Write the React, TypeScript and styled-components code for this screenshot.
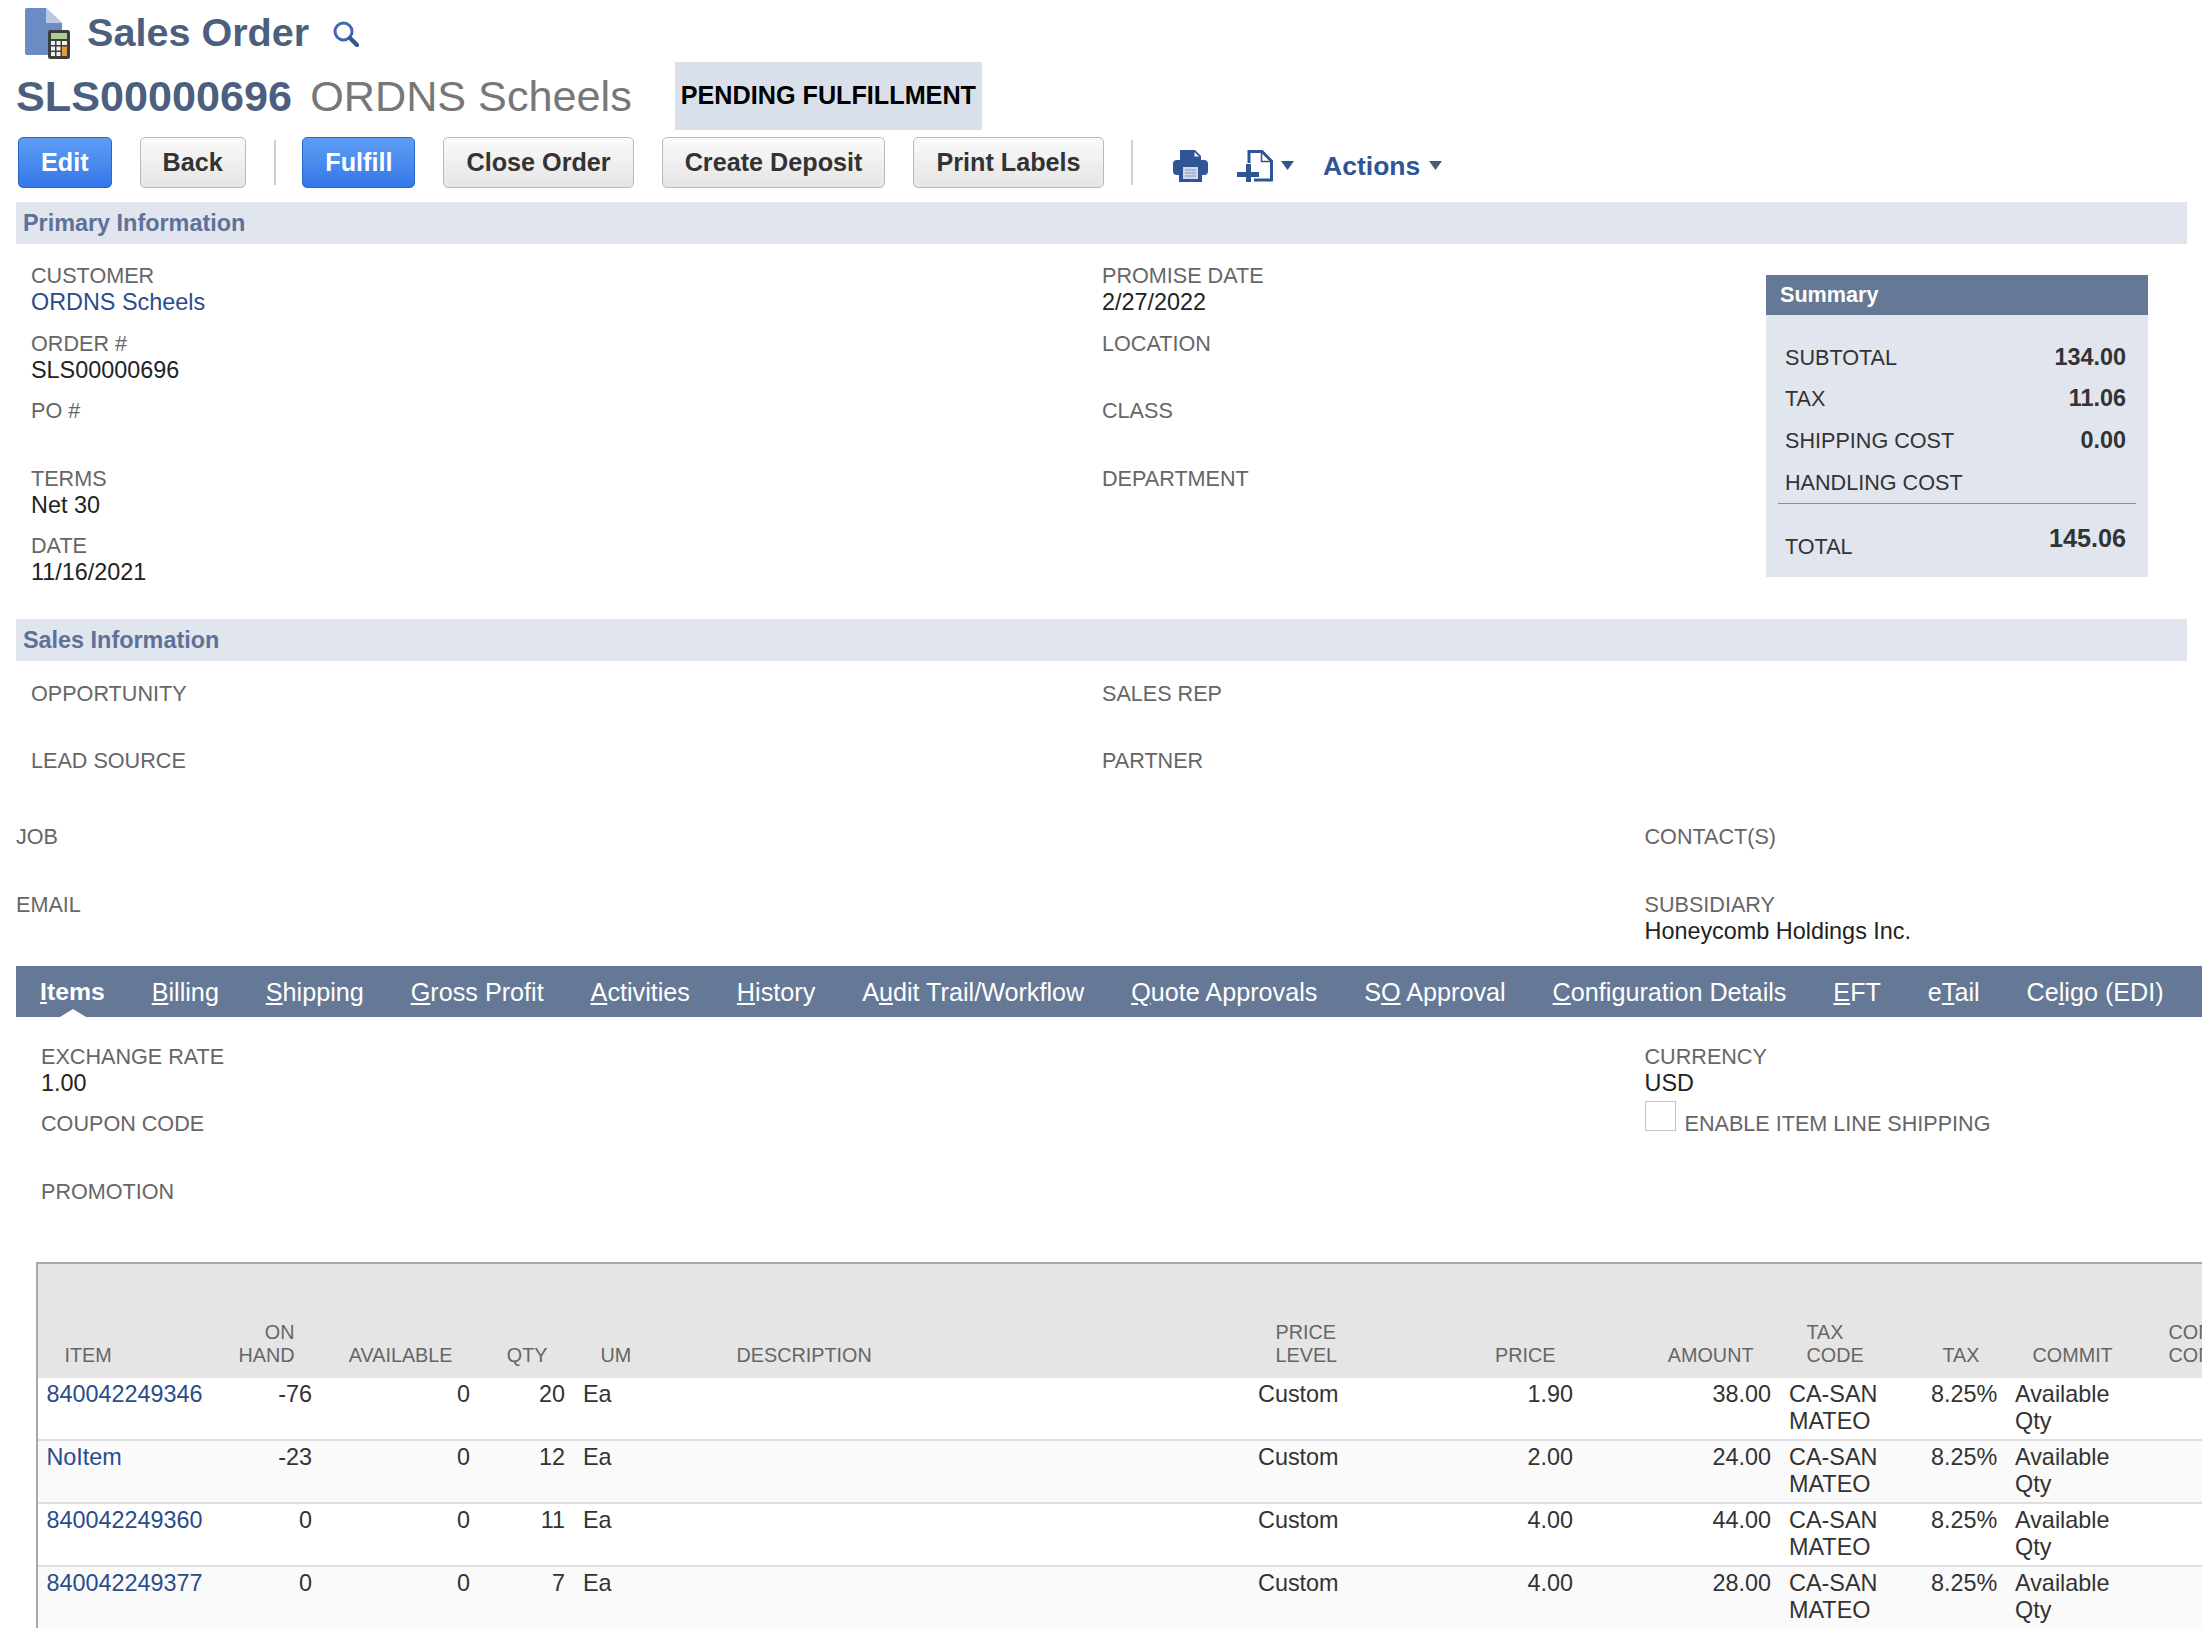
import React from 'react';
import styled, { createGlobalStyle } from 'styled-components';

const GlobalStyle = createGlobalStyle`
    html, body {
        margin: 0;
        padding: 0;
        background: #fff;
        font-family: "Liberation Sans", Arial, sans-serif;
        overflow: hidden;
    }
`;

const Page = styled.div`
    width: 2202px;
    height: 1628px;
    overflow: hidden;
    padding-left: 16px;
    box-sizing: border-box;
    font-size: 21.6px;
    color: #666;
`;

// Page title
const TitleRow = styled.div`
    height: 62px;
    display: flex;
    align-items: flex-start;
    padding-left: 9px;
`;
const TitleIcon = styled.svg`
    width: 45px;
    height: 51px;
    margin-top: 8px;
    flex: none;
`;
const Title = styled.h1`
    margin: 0 0 0 17px;
    font-size: 39.6px;
    line-height: 64px;
    font-weight: bold;
    color: #4d5f7e;
`;
const SearchIcon = styled.svg`
    width: 26px;
    height: 26px;
    margin: 21px 0 0 24px;
    flex: none;
`;

const RecordRow = styled.div`
    height: 68px;
    display: flex;
    align-items: flex-start;
`;
const RecordId = styled.span`
    font-size: 43.2px;
    line-height: 68px;
    font-weight: bold;
    color: #4d5f7e;
`;
const RecordName = styled.span`
    font-size: 43.2px;
    line-height: 68px;
    color: #777;
    margin-left: 18px;
`;
const StatusBadge = styled.div`
    margin-left: 43px;
    height: 68px;
    line-height: 66px;
    padding: 0 6px;
    background: #d9e0ea;
    color: #000;
    font-size: 25.2px;
    font-weight: bold;
    white-space: nowrap;
`;

// Toolbar
const Toolbar = styled.div`
    margin-top: 7px;
    height: 51px;
    display: flex;
    align-items: center;
    padding-left: 2px;
`;
const Button = styled.button<{ $primary?: boolean }>`
    height: 51px;
    padding: 0 22px;
    margin-right: 28px;
    box-sizing: border-box;
    border-radius: 5px;
    font-family: inherit;
    font-size: 25.2px;
    font-weight: bold;
    white-space: nowrap;
    border: 1px solid ${p => (p.$primary ? '#2a66c4' : '#b9b9b9')};
    color: ${p => (p.$primary ? '#fff' : '#333')};
    background: ${p => (p.$primary
        ? 'linear-gradient(#5f9ef6, #3477e8)'
        : 'linear-gradient(#fafafa, #e5e5e5)')};
`;
const ToolbarDivider = styled.span<{ $before?: number; $after: number }>`
    width: 2px;
    height: 45px;
    background: #d0d0d0;
    flex: none;
    margin-left: ${p => p.$before ?? 0}px;
    margin-right: ${p => p.$after}px;
`;
const PrintIcon = styled.svg`
    width: 35px;
    height: 32px;
    margin: 6px 29px 0 0;
    flex: none;
`;
const NewIcon = styled.svg`
    width: 36px;
    height: 32px;
    margin: 6px 8px 0 0;
    flex: none;
`;
const Caret = styled.svg`
    width: 13px;
    height: 9px;
    margin-top: 6px;
    flex: none;
`;
const ActionsLink = styled.span`
    margin: 7px 9px 0 29px;
    font-size: 26.5px;
    line-height: 30px;
    font-weight: bold;
    color: #2f5595;
`;

// Section bands and fields
const SectionBand = styled.div<{ $top: number }>`
    width: 2171px;
    height: 42px;
    margin-top: ${p => p.$top}px;
    padding-left: 7px;
    box-sizing: border-box;
    background: #e0e5ee;
    color: #5d7199;
    font-size: 23.4px;
    font-weight: bold;
    line-height: 42px;
`;
const FieldGrid = styled.div<{ $columns: string; $left: number; $top: number }>`
    display: grid;
    grid-template-columns: ${p => p.$columns};
    padding-left: ${p => p.$left}px;
    padding-top: ${p => p.$top}px;
`;
const FieldColumn = styled.div``;
const Field = styled.div`
    height: 54px;
    margin-bottom: 13.5px;
    line-height: 27px;
`;
const FieldLabel = styled.div`
    font-size: 21.6px;
    color: #666;
    white-space: nowrap;
`;
const FieldValue = styled.div`
    font-size: 23.4px;
    color: #222;
    white-space: nowrap;
`;
const FieldLink = styled(FieldValue)`
    color: #2b4c8c;
`;
const CheckRow = styled.div`
    position: relative;
    padding-left: 40px;
    line-height: 27px;
    height: 54px;
    margin-bottom: 13.5px;
    white-space: nowrap;
`;
const CheckBox = styled.span`
    position: absolute;
    left: 0;
    top: -9.5px;
    width: 31px;
    height: 30px;
    box-sizing: border-box;
    border: 1px solid #c4c4c4;
    background: #fff;
`;

// Summary box
const SummaryBox = styled.div`
    width: 382px;
    height: 302.7px;
    margin-top: 12.5px;
    background: #e0e5ee;
`;
const SummaryHead = styled.div`
    height: 40px;
    line-height: 40px;
    padding-left: 14px;
    background: #657896;
    color: #fff;
    font-size: 21.6px;
    font-weight: bold;
`;
const SummaryRows = styled.div`
    padding: 22px 22px 0 19px;
`;
const SummaryRow = styled.div`
    height: 41.7px;
    line-height: 41.7px;
    display: flex;
    justify-content: space-between;
    color: #333;
    font-size: 21.6px;
`;
const SummaryAmount = styled.span`
    font-size: 23.4px;
    font-weight: bold;
`;
const SummaryRule = styled.div`
    height: 1px;
    margin: 0 12px;
    background: #8c8c98;
`;
const SummaryTotal = styled.div`
    display: flex;
    justify-content: space-between;
    padding: 21px 22px 0 19px;
    line-height: 27px;
    color: #333;
`;
const TotalLabel = styled.span`
    padding-top: 8px;
    font-size: 21.6px;
`;
const TotalAmount = styled.span`
    font-size: 25.2px;
    font-weight: bold;
`;

// Tabs
const TabBar = styled.div`
    width: 2186px;
    height: 51px;
    margin-top: 7.7px;
    padding-left: 24px;
    box-sizing: border-box;
    display: flex;
    gap: 46.9px;
    background: #657896;
`;
const Tab = styled.span<{ $active?: boolean }>`
    position: relative;
    height: 51px;
    font-size: ${p => (p.$active ? '24.8px' : '25.2px')};
    line-height: 52.5px;
    color: #fff;
    white-space: nowrap;
    font-weight: ${p => (p.$active ? 'bold' : 'normal')};
    ${p => p.$active && `
        &::after {
            content: '';
            position: absolute;
            left: 20px;
            bottom: 0;
            border-left: 13px solid transparent;
            border-right: 13px solid transparent;
            border-bottom: 8px solid #fff;
        }
    `}
`;
const TabPanel = styled.div`
    padding-top: 25.5px;
`;

// Item table
const TableFrame = styled.div`
    margin: 17px 0 0 20px;
    border-left: 2px solid #a8a8a8;
    border-top: 2px solid #a8a8a8;
`;
const ItemTable = styled.table`
    table-layout: fixed;
    width: 2264px;
    border-collapse: separate;
    border-spacing: 0;
`;
const HeadRow = styled.tr`
    height: 114px;
    background: #e5e5e5;
`;
const HeadCell = styled.th<{ $right?: boolean }>`
    vertical-align: bottom;
    font-size: 19.8px;
    line-height: 23px;
    font-weight: normal;
    color: #666;
    white-space: nowrap;
    text-align: ${p => (p.$right ? 'right' : 'left')};
    padding: ${p => (p.$right ? '0 26.5px 11.5px 0' : '0 0 11.5px 26.5px')};
`;
const BodyRow = styled.tr<{ $shaded: boolean }>`
    background: ${p => (p.$shaded ? '#fafafa' : '#fff')};
`;
const BodyCell = styled.td<{ $right?: boolean }>`
    vertical-align: top;
    font-size: 23.4px;
    line-height: 27px;
    color: #333;
    text-align: ${p => (p.$right ? 'right' : 'left')};
    padding: 3px 9px 4.1px 9px;
    border-bottom: 2px solid #dedede;
    &:first-child {
        padding-left: 8.4px;
    }
`;
const ItemLink = styled.a`
    color: #2b4c8c;
    text-decoration: none;
`;

const CalculatorDoc = () => (
    <TitleIcon viewBox="0 0 45 51">
        <path d="M2 0h19l16 15v32H2a2 2 0 0 1-2-2V2a2 2 0 0 1 2-2z" fill="#6a8bc4" />
        <path d="M21 0l16 15H21z" fill="#b9c9e5" />
        <rect x="23" y="22" width="22" height="29" rx="2.5" fill="#3e3e3e" />
        <rect x="26" y="25" width="16" height="6" fill="#a9d08e" />
        <g fill="#f2f2f2">
            <rect x="26" y="33" width="4" height="4" /><rect x="31.5" y="33" width="4" height="4" />
            <rect x="26" y="38.5" width="4" height="4" /><rect x="31.5" y="38.5" width="4" height="4" />
            <rect x="26" y="44" width="4" height="4" /><rect x="31.5" y="44" width="4" height="4" />
            <rect x="37" y="33" width="5" height="4" />
        </g>
        <rect x="37" y="38.5" width="5" height="9.5" fill="#e39a3b" />
    </TitleIcon>
);

const Magnifier = () => (
    <SearchIcon viewBox="0 0 26 26">
        <circle cx="10.5" cy="10.5" r="8.5" fill="none" stroke="#3f68ab" strokeWidth="3" />
        <path d="M17 17l7 7" stroke="#34578f" strokeWidth="4.4" strokeLinecap="round" />
    </SearchIcon>
);

const Printer = () => (
    <PrintIcon viewBox="0 0 35 32">
        <path d="M7 0h15l6 6v7H7z" fill="#2f5595" />
        <path d="M21.5 2l4.5 4.5h-4.5z" fill="#fff" />
        <rect x="0" y="10" width="35" height="15" rx="4" fill="#2f5595" />
        <rect x="6" y="15" width="23" height="17" fill="#2f5595" />
        <rect x="10" y="17" width="15" height="12" fill="#cfd9ea" />
        <path d="M12 20h11M12 23h11M12 26h11" stroke="#7f97c2" strokeWidth="1.2" />
    </PrintIcon>
);

const NewDocument = () => (
    <NewIcon viewBox="0 0 36 32">
        <path d="M12 13V1.5h13L34.5 11v19H17" fill="none" stroke="#2f5595" strokeWidth="3" />
        <path d="M24.5 2v9.5H34" fill="none" stroke="#2f5595" strokeWidth="1.5" />
        <path d="M9 14h5v8h8v5h-8v5H9v-5H0v-5h9z" fill="#2f5595" />
    </NewIcon>
);

const DropCaret = ({ color }: { color: string }) => (
    <Caret viewBox="0 0 13 9">
        <path d="M0 0h13L6.5 9z" fill={color} />
    </Caret>
);

const tabs = [
    ['', 'I', 'tems'],
    ['', 'B', 'illing'],
    ['', 'S', 'hipping'],
    ['', 'G', 'ross Profit'],
    ['', 'A', 'ctivities'],
    ['', 'H', 'istory'],
    ['A', 'u', 'dit Trail/Workflow'],
    ['', 'Q', 'uote Approvals'],
    ['S', 'O', ' Approval'],
    ['', 'C', 'onfiguration Details'],
    ['', 'E', 'FT'],
    ['e', 'T', 'ail'],
    ['Ce', 'l', 'igo (EDI)'],
];

const columns: { label: React.ReactNode; width: number; right?: boolean }[] = [
    { label: 'ITEM', width: 172 },
    { label: <>ON<br />HAND</>, width: 111, right: true },
    { label: 'AVAILABLE', width: 158, right: true },
    { label: 'QTY', width: 95, right: true },
    { label: 'UM', width: 136 },
    { label: 'DESCRIPTION', width: 539 },
    { label: <>PRICE<br />LEVEL</>, width: 121 },
    { label: 'PRICE', width: 212, right: true },
    { label: 'AMOUNT', width: 198, right: true },
    { label: <>TAX<br />CODE</>, width: 142 },
    { label: 'TAX', width: 84, right: true },
    { label: 'COMMIT', width: 136 },
    { label: <>COMMITTED<br />CONFIRMED</>, width: 160 },
];

const rows = [
    { item: '840042249346', onHand: '-76', qty: '20', price: '1.90', amount: '38.00' },
    { item: 'NoItem', onHand: '-23', qty: '12', price: '2.00', amount: '24.00' },
    { item: '840042249360', onHand: '0', qty: '11', price: '4.00', amount: '44.00' },
    { item: '840042249377', onHand: '0', qty: '7', price: '4.00', amount: '28.00' },
];

const summaryRows = [
    ['SUBTOTAL', '134.00'],
    ['TAX', '11.06'],
    ['SHIPPING COST', '0.00'],
    ['HANDLING COST', ''],
];

const LabeledField = ({ label, value, link }: { label: string; value?: string; link?: boolean }) => (
    <Field>
        <FieldLabel>{label}</FieldLabel>
        {link ? <FieldLink>{value}</FieldLink> : <FieldValue>{value}</FieldValue>}
    </Field>
);

export default function App() {
    return (
        <Page>
            <GlobalStyle />
            <TitleRow>
                <CalculatorDoc />
                <Title>Sales Order</Title>
                <Magnifier />
            </TitleRow>
            <RecordRow>
                <RecordId>SLS00000696</RecordId>
                <RecordName>ORDNS Scheels</RecordName>
                <StatusBadge>PENDING FULFILLMENT</StatusBadge>
            </RecordRow>
            <Toolbar>
                <Button $primary>Edit</Button>
                <Button>Back</Button>
                <ToolbarDivider $after={26.5} />
                <Button $primary>Fulfill</Button>
                <Button>Close Order</Button>
                <Button>Create Deposit</Button>
                <Button>Print Labels</Button>
                <ToolbarDivider $before={-1} $after={40.5} />
                <Printer />
                <NewDocument />
                <DropCaret color="#2f5595" />
                <ActionsLink>Actions</ActionsLink>
                <DropCaret color="#4b5b7a" />
            </Toolbar>

            <SectionBand $top={14}>Primary Information</SectionBand>
            <FieldGrid $columns="1071px 664px 382px" $left={15} $top={18}>
                <FieldColumn>
                    <LabeledField label="CUSTOMER" value="ORDNS Scheels" link />
                    <LabeledField label="ORDER #" value="SLS00000696" />
                    <LabeledField label="PO #" />
                    <LabeledField label="TERMS" value="Net 30" />
                    <LabeledField label="DATE" value="11/16/2021" />
                </FieldColumn>
                <FieldColumn>
                    <LabeledField label="PROMISE DATE" value="2/27/2022" />
                    <LabeledField label="LOCATION" />
                    <LabeledField label="CLASS" />
                    <LabeledField label="DEPARTMENT" />
                </FieldColumn>
                <SummaryBox>
                    <SummaryHead>Summary</SummaryHead>
                    <SummaryRows>
                        {summaryRows.map(([name, amount]) => (
                            <SummaryRow key={name}>
                                <span>{name}</span>
                                <SummaryAmount>{amount}</SummaryAmount>
                            </SummaryRow>
                        ))}
                    </SummaryRows>
                    <SummaryRule />
                    <SummaryTotal>
                        <TotalLabel>TOTAL</TotalLabel>
                        <TotalAmount>145.06</TotalAmount>
                    </SummaryTotal>
                </SummaryBox>
            </FieldGrid>

            <SectionBand $top={19.5}>Sales Information</SectionBand>
            <FieldGrid $columns="1071px 1000px" $left={15} $top={18.5}>
                <LabeledField label="OPPORTUNITY" />
                <LabeledField label="SALES REP" />
                <LabeledField label="LEAD SOURCE" />
                <LabeledField label="PARTNER" />
            </FieldGrid>
            <FieldGrid $columns="1628.5px 500px" $left={0} $top={8.9}>
                <LabeledField label="JOB" />
                <LabeledField label="CONTACT(S)" />
                <LabeledField label="EMAIL" />
                <LabeledField label="SUBSIDIARY" value="Honeycomb Holdings Inc." />
            </FieldGrid>

            <TabBar>
                {tabs.map(([pre, key, post], i) => (
                    <Tab key={key + post} $active={i === 0}>
                        {pre}<u>{key}</u>{post}
                    </Tab>
                ))}
            </TabBar>
            <TabPanel>
                <FieldGrid $columns="1603.5px 500px" $left={25} $top={0}>
                    <LabeledField label="EXCHANGE RATE" value="1.00" />
                    <LabeledField label="CURRENCY" value="USD" />
                    <LabeledField label="COUPON CODE" />
                    <CheckRow>
                        <CheckBox />
                        <FieldLabel>ENABLE ITEM LINE SHIPPING</FieldLabel>
                    </CheckRow>
                    <LabeledField label="PROMOTION" />
                </FieldGrid>
            </TabPanel>

            <TableFrame>
                <ItemTable>
                    <colgroup>
                        {columns.map((c, i) => <col key={i} width={c.width} />)}
                    </colgroup>
                    <thead>
                        <HeadRow>
                            {columns.map((c, i) => (
                                <HeadCell key={i} $right={c.right}>{c.label}</HeadCell>
                            ))}
                        </HeadRow>
                    </thead>
                    <tbody>
                        {rows.map((r, i) => (
                            <BodyRow key={r.item} $shaded={i % 2 === 1}>
                                <BodyCell><ItemLink>{r.item}</ItemLink></BodyCell>
                                <BodyCell $right>{r.onHand}</BodyCell>
                                <BodyCell $right>0</BodyCell>
                                <BodyCell $right>{r.qty}</BodyCell>
                                <BodyCell>Ea</BodyCell>
                                <BodyCell />
                                <BodyCell>Custom</BodyCell>
                                <BodyCell $right>{r.price}</BodyCell>
                                <BodyCell $right>{r.amount}</BodyCell>
                                <BodyCell>CA-SAN MATEO</BodyCell>
                                <BodyCell $right>8.25%</BodyCell>
                                <BodyCell>Available Qty</BodyCell>
                                <BodyCell />
                            </BodyRow>
                        ))}
                    </tbody>
                </ItemTable>
            </TableFrame>
        </Page>
    );
}
